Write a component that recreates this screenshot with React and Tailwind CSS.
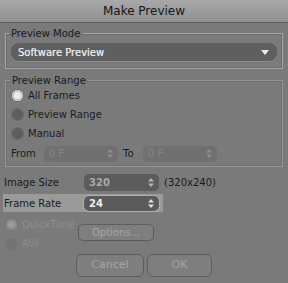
import React from 'react';

const font = { fontFamily: '"DejaVu Sans", "Verdana", sans-serif' };

const Stepper = ({ color = '#9a9a9a' }) => (
  <svg width="6" height="9" viewBox="0 0 6 9" className="shrink-0">
    <path d="M3 0 L6 3.5 L0 3.5 Z" fill={color} />
    <path d="M3 9 L6 5.5 L0 5.5 Z" fill={color} />
  </svg>
);

const Radio = ({ checked, disabled, label }) => (
  <div className={`flex h-[19px] items-center gap-[5px] pl-[6px] ${disabled ? 'text-[#8e8e8e]' : 'text-[#1a1a1a]'}`}>
    <span
      className={`h-[11px] w-[11px] rounded-full ${
        checked
          ? disabled
            ? 'bg-[#9a9a9a] shadow-[inset_0_0_0_2px_#8a8a8a,0_0_0_1px_#747474]'
            : 'bg-[#ececec] shadow-[inset_0_0_0_2px_#c4c4c4,0_0_0_1px_#6a6a6a]'
          : disabled
            ? 'bg-[#727272]'
            : 'bg-[#5e5e5e] shadow-[0_0_0_1px_#6c6c6c]'
      }`}
    />
    <span>{label}</span>
  </div>
);

const NumField = ({ value, className = '', textClass = '', arrow }) => (
  <div className={`flex items-center justify-between rounded-[5px] pl-[5px] pr-[5px] ${className}`}>
    <span className={textClass}>{value}</span>
    <Stepper color={arrow} />
  </div>
);

export default function App() {
  return (
    <div className="h-[283px] w-[288px] overflow-hidden bg-[#7a7a7a] text-[10px]" style={font}>
      <div className="flex h-[23px] items-center justify-center border-b border-[#5e5e5e] bg-gradient-to-b from-[#a9a9a9] to-[#8f8f8f] text-[12px] text-[#161616]">
        Make Preview
      </div>

      <div className="px-[5px] pt-[3px]">
        <fieldset className="border border-[#a3a3a3] px-[5px] pb-[7px] shadow-[inset_0_0_0_1px_#6c6c6c]">
          <legend className="-ml-[2px] px-[2px] text-[#1a1a1a]">Preview Mode</legend>
          <div className="mt-[2px] flex h-[18px] items-center justify-between rounded-[8px] bg-[#5f5f5f] pl-[7px] pr-[8px] text-[#e6e6e6] shadow-[0_1px_0_#8a8a8a]">
            <span className="[text-shadow:0_0_0.4px_#e6e6e6]">Software Preview</span>
            <svg width="8" height="5" viewBox="0 0 8 5">
              <path d="M0 0 L8 0 L4 5 Z" fill="#ececec" />
            </svg>
          </div>
        </fieldset>

        <fieldset className="mt-[4px] border border-[#959595] pb-[2px] shadow-[inset_0_0_0_1px_#707070]">
          <legend className="ml-[4px] px-[2px] text-[#1a1a1a]">Preview Range</legend>
          <div className="-mt-[2px]">
            <Radio checked label="All Frames" />
            <Radio label="Preview Range" />
            <Radio label="Manual" />
          </div>
          <div className="flex h-[21px] items-center pl-[5px] text-[#1a1a1a]">
            <span className="w-[33px]">From</span>
            <NumField value="0 F" className="h-[16px] w-[74px] bg-[#707070]" textClass="text-[#858585]" arrow="#8c8c8c" />
            <span className="ml-[5px] w-[20px]">To</span>
            <NumField value="0 F" className="h-[16px] w-[74px] bg-[#707070]" textClass="text-[#858585]" arrow="#8c8c8c" />
          </div>
        </fieldset>
      </div>

      <div className="mt-[6px] flex h-[18px] items-center pl-[4px] text-[#1a1a1a]">
        <span className="w-[80px]">Image Size</span>
        <NumField value="320" className="h-[17px] w-[75px] bg-[#5c5c5c]" textClass="text-[#a9a9a9] font-bold" arrow="#b5b5b5" />
        <span className="ml-[5px]">(320x240)</span>
      </div>

      <div className="mt-[3px] ml-[3px] flex h-[18px] w-[160px] items-center bg-[#9a9a9a] pl-[1px] text-[#1a1a1a]">
        <span className="w-[80px]">Frame Rate</span>
        <NumField value="24" className="h-[15px] w-[75px] bg-[#5a5a5a] shadow-[0_0_0_1px_#b0b0b0]" textClass="text-[#f0f0f0] font-bold" arrow="#e0e0e0" />
      </div>

      <div className="mt-[3px] flex">
        <div className="w-[78px]">
          <Radio checked disabled label="QuickTime" />
          <Radio disabled label="AVI" />
        </div>
        <button className="mt-[9px] h-[17px] w-[76px] rounded-[5px] border border-[#5d5d5d] bg-[#7e7e7e] text-[#a7a7a7]">
          Options...
        </button>
      </div>

      <div className="mt-[1px] flex gap-[3px] pl-[76px]">
        <button className="h-[23px] w-[68px] rounded-[6px] border border-[#5d5d5d] bg-[#7e7e7e] text-[11px] text-[#a7a7a7]">
          Cancel
        </button>
        <button className="h-[23px] w-[65px] rounded-[6px] border border-[#5d5d5d] bg-[#7e7e7e] text-[11px] text-[#a7a7a7]">
          OK
        </button>
      </div>
    </div>
  );
}
